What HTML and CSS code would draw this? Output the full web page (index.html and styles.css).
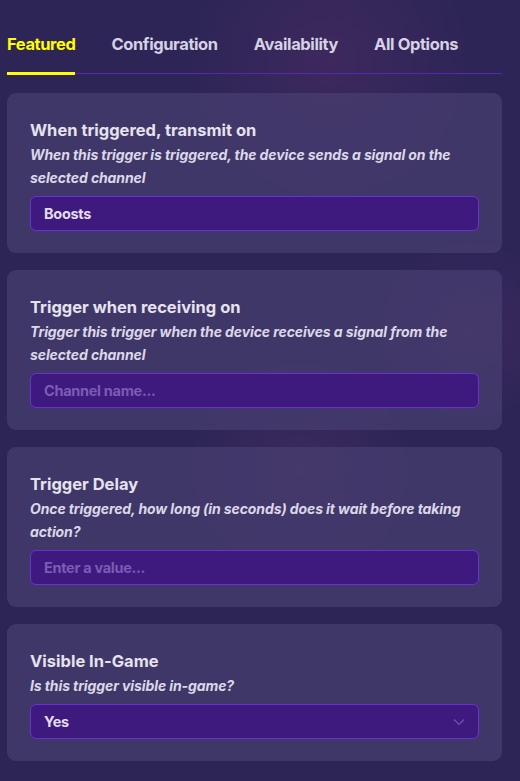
FILE: index.html
```html
<!DOCTYPE html>
<html>
<head>
<meta charset="utf-8">
<link rel="stylesheet" href="styles.css">
</head>
<body>
<div class="page">
  <nav class="tabs">
    <div class="tab active">Featured</div>
    <div class="tab">Configuration</div>
    <div class="tab">Availability</div>
    <div class="tab">All Options</div>
  </nav>
  <div class="cards">
    <section class="card">
      <h2 class="title">When triggered, transmit on</h2>
      <p class="desc">When this trigger is triggered, the device sends a signal on the selected channel</p>
      <div class="field"><span class="value">Boosts</span></div>
    </section>
    <section class="card">
      <h2 class="title">Trigger when receiving on</h2>
      <p class="desc">Trigger this trigger when the device receives a signal from the selected channel</p>
      <div class="field"><span class="placeholder">Channel name...</span></div>
    </section>
    <section class="card">
      <h2 class="title">Trigger Delay</h2>
      <p class="desc">Once triggered, how long (in seconds) does it wait before taking action?</p>
      <div class="field"><span class="placeholder">Enter a value...</span></div>
    </section>
    <section class="card">
      <h2 class="title">Visible In-Game</h2>
      <p class="desc">Is this trigger visible in-game?</p>
      <div class="field select"><span class="value">Yes</span>
        <svg class="chev" width="12" height="8" viewBox="0 0 12 8"><path d="M1 1.5 L6 6.5 L11 1.5" fill="none" stroke="#6f52b0" stroke-width="1.2"/></svg>
      </div>
    </section>
  </div>
</div>
</body>
</html>
```

FILE: styles.css
```css
* { box-sizing: border-box; }
html, body { margin: 0; padding: 0; }
body {
  width: 520px;
  height: 781px;
  overflow: hidden;
  font-family: Inter, "Noto Sans", sans-serif;
  background:
    radial-gradient(circle at 330px 60px, rgba(80,45,100,0.45), transparent 140px),
    radial-gradient(circle at 300px 470px, rgba(90,50,100,0.35), transparent 110px),
    radial-gradient(circle at 470px 330px, rgba(90,50,100,0.35), transparent 90px),
    #2e2557;
}
.page { padding: 0 18px 0 7px; }
.tabs {
  display: flex;
  gap: 36px;
  padding-top: 32px;
  border-bottom: 1px solid #5a22c0;
  margin-bottom: 19px;
}
.tab {
  font-size: 16.5px;
  font-weight: 700;
  color: #d6d1e4;
  letter-spacing: -0.4px;
  line-height: 24px;
  padding-bottom: 17px;
}
.tab.active {
  color: #ffff00;
  border-bottom: 3px solid #ffff00;
  margin-bottom: -2px;
  padding-bottom: 15px;
}
.cards { display: flex; flex-direction: column; gap: 17px; }
.card {
  background: rgba(72,62,112,0.72);
  border-radius: 9px;
  padding: 24px 23px 22px 23px;
}
.title {
  margin: 0;
  font-size: 16.5px;
  font-weight: 700;
  color: #e6e2ee;
  line-height: 26px;
  letter-spacing: 0;
}
.desc {
  margin: 0 0 7px 0;
  font-size: 14px;
  font-style: italic;
  font-weight: 700;
  color: #dcd7e8;
  line-height: 23px;
  letter-spacing: -0.1px;
}
.field {
  height: 35px;
  background: #3e1a7e;
  border: 1px solid #6b2fd6;
  border-radius: 6px;
  display: flex;
  align-items: center;
  padding: 0 13px;
  font-size: 14.5px;
  font-weight: 700;
  letter-spacing: -0.3px;
}
.value { color: #e4dff0; }
.placeholder { color: #7a5cb5; }
.select { justify-content: space-between; }
.chev { margin-right: 0; }
```
